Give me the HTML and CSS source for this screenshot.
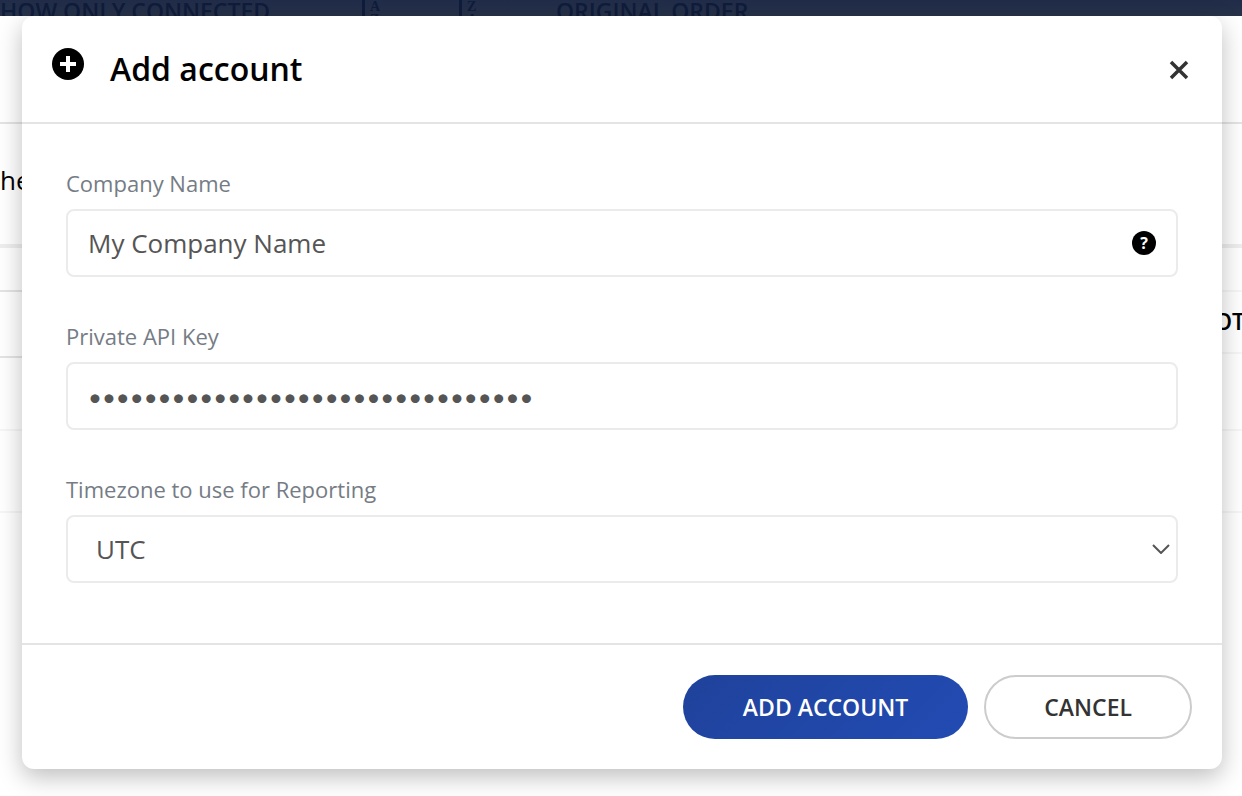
FILE: index.html
```
<!DOCTYPE html>
<html lang="en">
<head>
    <meta charset="UTF-8">
    <meta name="viewport" content="width=device-width, initial-scale=1.0">
    <title>Add account</title>
    <link rel="stylesheet" href="styles.css">
</head>
<body>
    <div class="page">
        <div class="toolbar">
            <span class="toolbar-item filter">HOW ONLY CONNECTED</span>
            <span class="sort"><span class="sort-bar"></span><span class="sort-letters">A<br>Z</span></span>
            <span class="sort"><span class="sort-bar"></span><span class="sort-letters">Z<br>A</span></span>
            <span class="toolbar-item">ORIGINAL ORDER</span>
        </div>
        <div class="band"></div>
        <div class="intro">he</div>
        <div class="tables">
            <div class="rows">
                <div class="row head strong"></div>
                <div class="row title strong"></div>
                <div class="row"></div>
                <div class="row"></div>
            </div>
            <div class="rows side">
                <div class="row head"></div>
                <div class="row title">OT</div>
                <div class="row"></div>
                <div class="row"></div>
            </div>
        </div>
    </div>

    <div class="overlay">
        <form class="modal" role="dialog" aria-labelledby="modalTitle">
            <header class="modal-header">
                <svg class="plus-icon" viewBox="0 0 32 32" aria-hidden="true">
                    <circle cx="16" cy="16" r="16"/>
                    <path d="M16 8v16M8 16h16" stroke="#fff" stroke-width="4"/>
                </svg>
                <h1 id="modalTitle">Add account</h1>
                <button type="button" class="close" aria-label="Close">
                    <svg viewBox="0 0 24 20" aria-hidden="true">
                        <path d="M3 2l16 16M19 2L3 18"/>
                    </svg>
                </button>
            </header>

            <div class="modal-body">
                <div class="field">
                    <label for="company">Company Name</label>
                    <div class="control">
                        <input type="text" id="company" value="My Company Name">
                        <button type="button" class="help" aria-label="Help">?</button>
                    </div>
                </div>
                <div class="field">
                    <label for="apiKey">Private API Key</label>
                    <div class="control">
                        <input type="password" id="apiKey" value="00000000000000000000000000000000">
                    </div>
                </div>
                <div class="field">
                    <label for="timezone">Timezone to use for Reporting</label>
                    <div class="control">
                        <select id="timezone">
                            <option>UTC</option>
                        </select>
                        <svg class="chevron" viewBox="0 0 18 10" aria-hidden="true">
                            <path d="M1 1l8 8 8-8"/>
                        </svg>
                    </div>
                </div>
            </div>

            <footer class="modal-footer">
                <button type="button" class="button primary">ADD ACCOUNT</button>
                <button type="button" class="button">CANCEL</button>
            </footer>
        </form>
    </div>
</body>
</html>
```
FILE: styles.css
```
:root {
    --navy: #202c49;
    --navy-text: #101c3b;
    --line: #e4e4e4;
    --line-light: #f6f6f6;
    --field-border: #ebebeb;
    --label-color: #757c85;
    --field-text: #555555;
}

* {
    margin: 0;
    padding: 0;
    box-sizing: border-box;
}

body {
    font-family: "Open Sans", "Noto Sans", sans-serif;
    color: #000;
    background-color: #fff;
}

/* Page behind the dialog */
.page {
    height: 100vh;
    overflow: hidden;
}

.toolbar {
    display: flex;
    height: 16px;
    overflow: hidden;
    color: var(--navy-text);
    background: linear-gradient(var(--navy), #273249);
}

.toolbar-item {
    font-size: 23px;
    font-weight: 600;
    line-height: 22px;
    white-space: nowrap;
}

.filter {
    width: 362px;
}

.sort {
    display: flex;
    gap: 5px;
    width: 97px;
}

.sort-bar {
    width: 3px;
    height: 28px;
    background-color: var(--navy-text);
}

.sort-letters {
    font-family: "Liberation Serif", serif;
    font-size: 14px;
    font-weight: bold;
    line-height: 13px;
}

.band {
    height: 108px;
    border-bottom: 2px solid var(--line);
}

.intro {
    height: 124px;
    padding-top: 38px;
    font-size: 26px;
    line-height: 36px;
    border-bottom: 4px solid #eeeeee;
}

.tables {
    display: grid;
    grid-template-columns: 1fr 28px;
}

.row {
    height: 82px;
    border-bottom: 2px solid var(--line-light);
}

.row.head {
    height: 44px;
}

.row.title {
    height: 66px;
    font-size: 23px;
    font-weight: 600;
    line-height: 58px;
}

.row.strong {
    border-color: var(--line);
}

.row.title + .row {
    height: 73px;
}

.side {
    overflow: hidden;
}

.side .title {
    height: 62px;
}

.side .title + .row {
    height: 77px;
}

/* Dialog */
.overlay {
    position: absolute;
    inset: 0;
    padding: 16px 20px 16px 22px;
}

.modal {
    background-color: #fff;
    border-radius: 12px;
    box-shadow: 0 8px 24px rgba(0, 0, 0, 0.26);
}

.modal-header {
    display: flex;
    align-items: flex-start;
    padding: 30px;
    border-bottom: 2px solid var(--line);
}

.plus-icon {
    width: 32px;
    height: 32px;
    margin: 2px 26px 0 0;
}

h1 {
    flex: 1;
    font-size: 32px;
    font-weight: 600;
    line-height: 46px;
}

.close {
    display: flex;
    margin-top: 14px;
    background: none;
    border: none;
    cursor: pointer;
}

.close svg {
    width: 24px;
    height: 20px;
    fill: none;
    stroke: #333;
    stroke-width: 3.5;
}

.modal-body {
    display: flex;
    flex-direction: column;
    gap: 45px;
    padding: 45px 44px 60px;
}

.field {
    display: flex;
    flex-direction: column;
    gap: 12px;
}

label {
    font-size: 22px;
    line-height: 28px;
    color: var(--label-color);
}

.control {
    position: relative;
}

input,
select {
    display: block;
    width: 100%;
    height: 68px;
    padding: 0 20px;
    font-family: inherit;
    font-size: 26px;
    color: var(--field-text);
    background-color: #fff;
    border: 2px solid var(--field-border);
    border-radius: 8px;
    outline: none;
}

input[type="password"] {
    font-family: Lato, sans-serif;
    font-size: 24px;
}

select {
    padding: 0 28px;
    appearance: none;
}

.help {
    position: absolute;
    top: 22px;
    right: 22px;
    width: 24px;
    height: 24px;
    font-family: inherit;
    font-size: 16px;
    font-weight: 700;
    line-height: 24px;
    color: #fff;
    background-color: #000;
    border: none;
    border-radius: 50%;
    cursor: pointer;
}

.chevron {
    position: absolute;
    top: 29px;
    right: 8px;
    width: 18px;
    height: 10px;
    fill: none;
    stroke: #555;
    stroke-width: 2;
    pointer-events: none;
}

.modal-footer {
    display: flex;
    justify-content: flex-end;
    gap: 16px;
    padding: 30px;
    border-top: 2px solid var(--line);
}

.button {
    height: 64px;
    padding: 0 58px;
    font-family: inherit;
    font-size: 23px;
    font-weight: 600;
    color: #333;
    background-color: #fff;
    border: 2px solid #ccc;
    border-radius: 32px;
    cursor: pointer;
}

.button.primary {
    padding: 0 60px;
    color: #fff;
    background: linear-gradient(135deg, #1f429b, #224bb3);
    border: none;
}
```
